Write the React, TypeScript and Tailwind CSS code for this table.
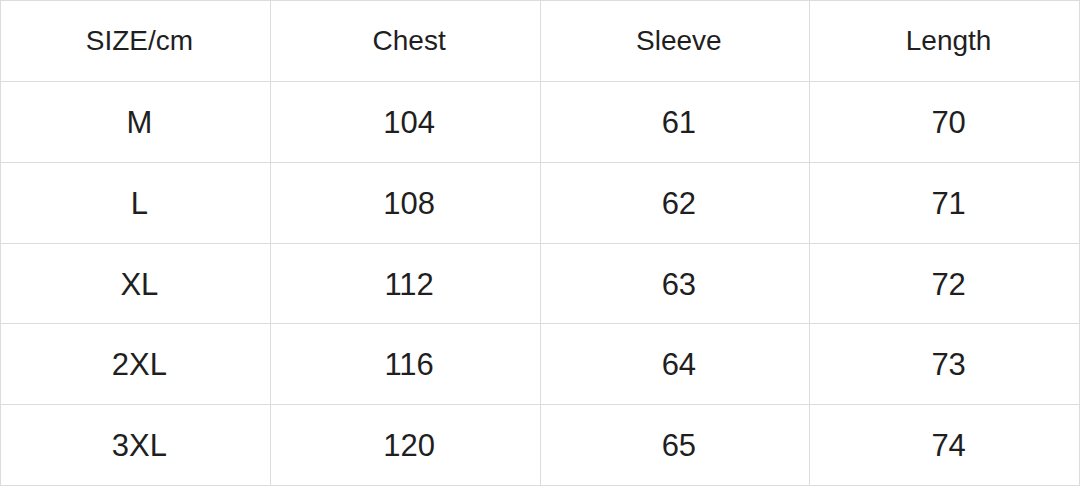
import React from "react";

const header = ["SIZE/cm", "Chest", "Sleeve", "Length"];
const rows = [
  ["M", "104", "61", "70"],
  ["L", "108", "62", "71"],
  ["XL", "112", "63", "72"],
  ["2XL", "116", "64", "73"],
  ["3XL", "120", "65", "74"],
];

export default function App() {
  return (
    <div
      className="w-[1080px] h-[486px] bg-[#dcdce0] p-px grid grid-cols-4 grid-rows-6 gap-px text-[#1f1f1f]"
      style={{ fontFamily: '"Liberation Sans", Arial, sans-serif' }}
    >
      {header.map((h) => (
        <div key={h} className="bg-white flex items-center justify-center pl-2 text-[28px]">
          {h}
        </div>
      ))}
      {rows.map((r, i) =>
        r.map((c, j) => (
          <div key={`${i}-${j}`} className="bg-white flex items-center justify-center pl-2 pt-[3px] text-[31px]">
            {c}
          </div>
        ))
      )}
    </div>
  );
}
